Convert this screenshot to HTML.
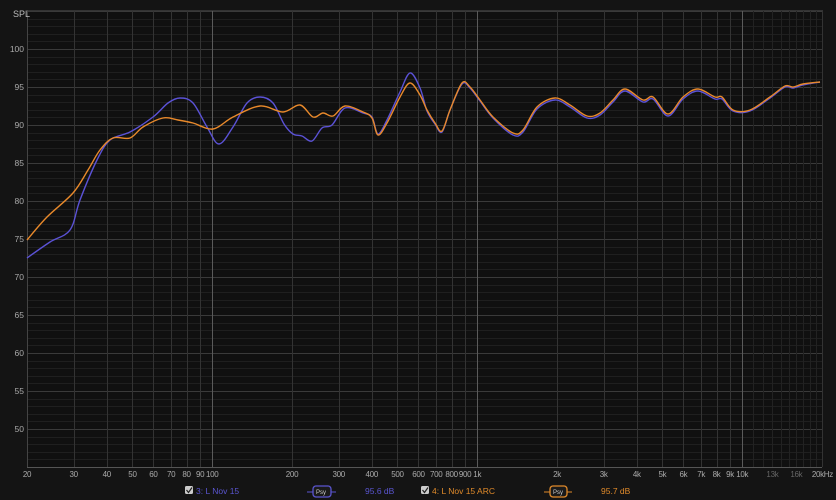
<!DOCTYPE html>
<html><head><meta charset="utf-8"><style>
html,body{margin:0;padding:0;background:#141414;width:836px;height:500px;overflow:hidden;font-family:"Liberation Sans",sans-serif}
svg{display:block}
text{font-family:"Liberation Sans",sans-serif}
</style></head><body>
<svg id="s" width="836" height="500" xmlns="http://www.w3.org/2000/svg">
<rect width="836" height="500" fill="#141414"/>
<rect x="27" y="10" width="795" height="457" fill="#101010"/>
<g id="grid"></g>
<text x="13" y="17" font-size="9" fill="#bbb">SPL</text>
<g id="lab" font-size="8.5" fill="#aaa"></g>
<g id="xlab" font-size="8" fill="#aaa" letter-spacing="-0.3"></g>
<path id="blue" fill="none" stroke="#5b52d6" stroke-width="1.4"/>
<path id="orange" fill="none" stroke="#e8892b" stroke-width="1.4"/>
<g font-size="8.5">
<rect x="185" y="486" width="8" height="8" rx="1.5" fill="#ccc"/>
<path d="M186.5 490 l2 2.5 l3.5 -5" stroke="#222" stroke-width="1.2" fill="none"/>
<text x="196" y="494" fill="#5a55d0">3: L Nov 15</text>
<line x1="307" y1="492" x2="336" y2="492" stroke="#5a55d0"/>
<rect x="313" y="486" width="18" height="11" rx="3" fill="#1a1a1a" stroke="#5a55d0" stroke-width="1.3"/>
<text x="316" y="494" font-size="6" fill="#ccc">Psy</text>
<text x="365" y="494" fill="#5a55d0">95.6 dB</text>
<rect x="421" y="486" width="8" height="8" rx="1.5" fill="#ccc"/>
<path d="M422.5 490 l2 2.5 l3.5 -5" stroke="#222" stroke-width="1.2" fill="none"/>
<text x="432" y="494" fill="#e08a2a">4: L Nov 15 ARC</text>
<line x1="544" y1="492" x2="572" y2="492" stroke="#e08a2a"/>
<rect x="550" y="486" width="17" height="11" rx="3" fill="#1a1a1a" stroke="#e08a2a" stroke-width="1.3"/>
<text x="553" y="494" font-size="6" fill="#ccc">Psy</text>
<text x="601" y="494" fill="#e08a2a">95.7 dB</text>
</g>
</svg>
<script>
var NS="http://www.w3.org/2000/svg";
function fx(f){return 27+Math.log10(f/20)/3*795;}
function fy(d){return 49+(100-d)*7.6;}
var g=document.getElementById('grid'),lab=document.getElementById('lab'),xlab=document.getElementById('xlab');
function ln(x1,y1,x2,y2,c){var l=document.createElementNS(NS,'line');l.setAttribute('x1',x1);l.setAttribute('y1',y1);l.setAttribute('x2',x2);l.setAttribute('y2',y2);l.setAttribute('stroke',c);l.setAttribute('stroke-width',1);g.appendChild(l);}
function tx(p,x,y,s,a,c){var t=document.createElementNS(NS,'text');t.setAttribute('x',x);t.setAttribute('y',y);t.setAttribute('text-anchor',a);if(c)t.setAttribute('fill',c);t.textContent=s;p.appendChild(t);}
for(var d=46;d<=105;d++){var y=Math.round(fy(d))+0.5;ln(27,y,822,y,d%5==0?'#3a3a3a':'#1f1f1f');}
for(var d=50;d<=100;d+=5){tx(lab,24,fy(d)+3,d,'end');}
var fs=[20,30,40,50,60,70,80,90,100,200,300,400,500,600,700,800,900,1000,2000,3000,4000,5000,6000,7000,8000,9000,10000];
fs.forEach(function(f){var x=Math.round(fx(f))+0.5;var c=(f==100||f==1000||f==10000)?'#5a5a5a':'#333';ln(x,10,x,467,c);});
for(var f=11000;f<20000;f+=1000){var x=Math.round(fx(f))+0.5;ln(x,10,x,467,'#222');}
ln(27,467.5,822,467.5,'#555');ln(822.5,10,822.5,467,'#333');ln(27,10.5,822,10.5,'#333');ln(27.5,10,27.5,467,'#444');
var L=[[20,'20'],[30,'30'],[40,'40'],[50,'50'],[60,'60'],[70,'70'],[80,'80'],[90,'90'],[100,'100'],[200,'200'],[300,'300'],[400,'400'],[500,'500'],[600,'600'],[700,'700'],[800,'800'],[900,'900'],[1000,'1k'],[2000,'2k'],[3000,'3k'],[4000,'4k'],[5000,'5k'],[6000,'6k'],[7000,'7k'],[8000,'8k'],[9000,'9k'],[10000,'10k'],[13000,'13k','#666'],[16000,'16k','#666']];
L.forEach(function(a){tx(xlab,fx(a[0]),477,a[1],'middle',a[2]);});
tx(xlab,833,477,'20kHz','end');
function path(p){var d='M'+p[0][0]+' '+p[0][1];for(var i=0;i<p.length-1;i++){var p0=p[i-1]||p[i],p1=p[i],p2=p[i+1],p3=p[i+2]||p2;var c1x=p1[0]+(p2[0]-p0[0])/6,c1y=p1[1]+(p2[1]-p0[1])/6,c2x=p2[0]-(p3[0]-p1[0])/6,c2y=p2[1]-(p3[1]-p1[1])/6;d+=' C'+c1x.toFixed(1)+' '+c1y.toFixed(1)+' '+c2x.toFixed(1)+' '+c2y.toFixed(1)+' '+p2[0]+' '+p2[1];}return d;}
var blue=[[27,258],[50,242],[70,230],[80,200],[97,160],[110,140],[130,132],[153,117],[168,103],[180,98],[193,103],[207,127],[219,144],[233,127],[247,103],[260,97],[273,103],[284,124],[293,134],[302,136],[312,141],[322,128],[332,125],[345,108],[363,113],[372,117],[378,134],[387,120],[400,92],[410,73],[420,88],[427,111],[435,124],[442,132],[450,110],[462,84],[470,88],[480,101],[493,118],[513,135],[523,132],[537,109],[555,100],[570,107],[587,118],[600,115],[613,102],[625,91],[643,102],[653,99],[668,116],[683,99],[698,91],[715,99],[722,99],[733,111],[750,111],[770,98],[785,87],[793,88],[803,85],[820,82]];
var orange=[[27,240],[47,217],[73,193],[88,170],[100,150],[113,138],[130,138],[143,127],[163,118],[178,120],[193,123],[213,129],[233,117],[260,106],[283,112],[300,105],[313,117],[323,113],[333,116],[345,106],[363,112],[372,118],[378,135],[387,123],[400,97],[410,83],[420,95],[427,110],[435,123],[442,131],[450,110],[462,83],[470,87],[480,100],[493,117],[513,133],[523,130],[537,107],[555,98],[570,105],[587,116],[600,113],[613,100],[625,89],[643,100],[653,97],[668,114],[683,97],[698,89],[715,97],[722,97],[733,110],[750,110],[770,97],[785,86],[793,87],[803,84],[820,82]];
document.getElementById('blue').setAttribute('d',path(blue));
document.getElementById('orange').setAttribute('d',path(orange));
</script>
</body></html>
